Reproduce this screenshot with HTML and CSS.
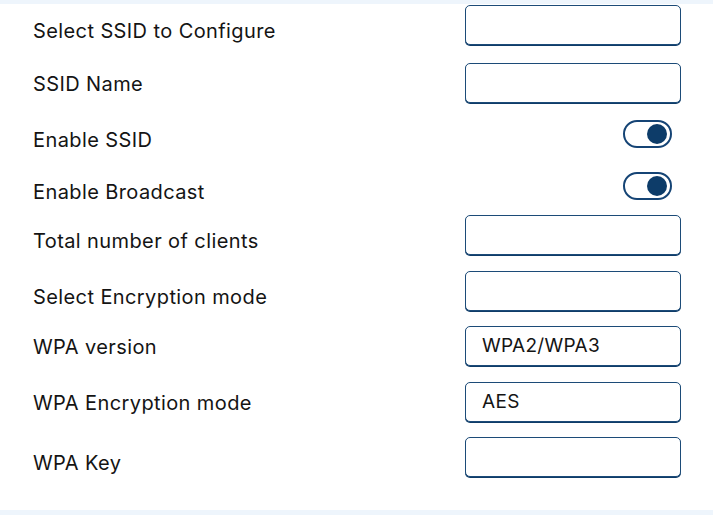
FILE: index.html
```html
<!DOCTYPE html>
<html>
<head>
<meta charset="utf-8">
<link rel="stylesheet" href="styles.css">
</head>
<body>
<div class="bar"></div>
<div class="form">
  <div class="label low">Select SSID to Configure</div>
  <div class="field"><div class="input"></div></div>

  <div class="label mid">SSID Name</div>
  <div class="field"><div class="input"></div></div>

  <div class="label low">Enable SSID</div>
  <div class="field"><div class="toggle"><span class="knob"></span></div></div>

  <div class="label low">Enable Broadcast</div>
  <div class="field"><div class="toggle"><span class="knob"></span></div></div>

  <div class="label low">Total number of clients</div>
  <div class="field"><div class="input"></div></div>

  <div class="label low">Select Encryption mode</div>
  <div class="field"><div class="input"></div></div>

  <div class="label mid">WPA version</div>
  <div class="field"><div class="input">WPA2/WPA3</div></div>

  <div class="label mid">WPA Encryption mode</div>
  <div class="field"><div class="input">AES</div></div>

  <div class="label low">WPA Key</div>
  <div class="field"><div class="input"></div></div>
</div>
<div class="bar bottom"></div>
</body>
</html>
```

FILE: styles.css
```css
html, body {
  margin: 0;
  padding: 0;
  background: #ffffff;
}
body {
  width: 713px;
  height: 515px;
  overflow: hidden;
  font-family: "Inter", "Liberation Sans", sans-serif;
  color: #141414;
}
.bar {
  height: 4px;
  background: #eef5fc;
}
.bar.bottom {
  height: 5px;
}
.form {
  display: grid;
  grid-template-columns: 1fr 216px;
  grid-template-rows: 58px 51px 52px 49px 56px 55px 56px 55px 73px;
  padding: 1px 32px 0 33px;
}
.label {
  font-size: 20px;
  letter-spacing: 0.4px;
  line-height: 40px;
  height: 40px;
  align-self: start;
}
.label.low { margin-top: 6px; }
.label.mid { margin-top: 1px; }
.field {
  align-self: start;
  height: 40px;
  display: flex;
  align-items: center;
  justify-content: flex-end;
}
.input {
  box-sizing: border-box;
  width: 216px;
  height: 40px;
  border: 1.5px solid #1c4b78;
  border-radius: 5px;
  box-shadow: 0 1px 0 #0f3c68;
  background: #fff;
  padding: 0 16px;
  font-size: 19px;
  letter-spacing: 0.3px;
  line-height: 37px;
  color: #141414;
}
.toggle {
  box-sizing: border-box;
  width: 49px;
  height: 28px;
  margin-right: 9px;
  border: 2px solid #154475;
  border-radius: 14px;
  background: #fff;
  display: flex;
  align-items: center;
  justify-content: flex-end;
  padding-right: 3px;
}
.knob {
  width: 20px;
  height: 20px;
  border-radius: 50%;
  background: #0d3c69;
}
```
